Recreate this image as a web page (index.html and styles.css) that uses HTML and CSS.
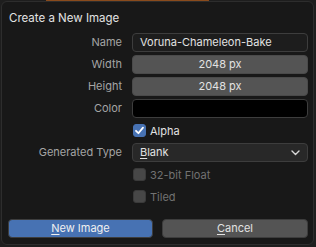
FILE: index.html
```html
<!DOCTYPE html>
<html>
<head>
<meta charset="utf-8">
<link rel="stylesheet" href="styles.css">
</head>
<body>
<div class="strip"></div>
<div class="dialog">
  <div class="title">Create a New Image</div>
  <div class="form">
    <div class="label">Name</div>
    <div class="field text">Voruna-Chameleon-Bake</div>
    <div class="label">Width</div>
    <div class="field num">2048 px</div>
    <div class="label">Height</div>
    <div class="field num">2048 px</div>
    <div class="label">Color</div>
    <div class="field color"></div>
    <div class="label"></div>
    <div class="check-row">
      <span class="box on"><svg width="13" height="13" viewBox="0 0 13 13"><polyline points="3,6.8 5.4,9.2 10,3.6" fill="none" stroke="#fff" stroke-width="1.8" stroke-linecap="round" stroke-linejoin="round"/></svg></span>
      <span class="ctext">Alpha</span>
    </div>
    <div class="label">Generated Type</div>
    <div class="field select"><span><u>B</u>lank</span><svg width="9" height="6" viewBox="0 0 9 6"><polyline points="1,1 4.5,4.5 8,1" fill="none" stroke="#d8d8d8" stroke-width="1.4" stroke-linecap="round" stroke-linejoin="round"/></svg></div>
    <div class="label"></div>
    <div class="check-row off">
      <span class="box"></span>
      <span class="ctext">32-bit Float</span>
    </div>
    <div class="label"></div>
    <div class="check-row off">
      <span class="box"></span>
      <span class="ctext">Tiled</span>
    </div>
  </div>
  <div class="buttons">
    <div class="btn primary"><u>N</u>ew Image</div>
    <div class="btn"><u>C</u>ancel</div>
  </div>
</div>
</body>
</html>
```
FILE: styles.css
```css
html, body {
  margin: 0;
  padding: 0;
  background: #1e1e1e;
  width: 316px;
  height: 247px;
  overflow: hidden;
  font-family: Inter, "Noto Sans", "DejaVu Sans", sans-serif;
  font-size: 11px;
}
.strip {
  height: 1px;
  width: 163px;
  margin-left: 46px;
  background: #8a4b1c;
}
.dialog {
  box-sizing: border-box;
  margin-left: 1px;
  width: 313px;
  height: 244px;
  background: #181818;
  border: 1px solid #2d2d2d;
  border-radius: 6px;
  padding: 6px 5px 6px 6px;
  display: flex;
  flex-direction: column;
}
.title {
  height: 20px;
  line-height: 20px;
  color: #e2e2e2;
  font-size: 11.5px;
  padding-left: 1px;
}
.form {
  margin-top: 5px;
  display: grid;
  grid-template-columns: 114px 176px;
  column-gap: 10px;
  row-gap: 3px;
  grid-auto-rows: 19px;
}
.label {
  text-align: right;
  color: #a5a5a5;
  line-height: 19px;
}
.field {
  box-sizing: border-box;
  border: 1px solid #3d3d3d;
  border-radius: 4px;
  color: #e2e2e2;
  line-height: 17px;
}
.text {
  background: #1d1d1d;
  padding-left: 7px;
}
.num {
  background: #545454;
  text-align: center;
  border-color: #4a4a4a;
}
.color {
  background: #000;
  border-color: #3d3d3d;
}
.select {
  background: #282828;
  padding: 0 7px 0 7px;
  display: flex;
  align-items: center;
  justify-content: space-between;
}
.select svg { margin-top: 1px; }
u {
  text-decoration: underline;
  text-underline-offset: 2px;
  text-decoration-thickness: 1px;
}
.check-row {
  display: flex;
  align-items: center;
  gap: 4px;
  color: #e2e2e2;
  padding-left: 1px;
}
.box {
  box-sizing: border-box;
  width: 13px;
  height: 13px;
  border-radius: 3px;
  background: #474747;
  border: 1px solid #3a3a3a;
  display: flex;
}
.box.on {
  background: #4772b3;
  border-color: #4772b3;
}
.box.on svg { margin: -1px; }
.off .ctext { color: #727272; }
.buttons {
  margin-top: 13px;
  display: grid;
  grid-template-columns: 145px 146px;
  column-gap: 9px;
}
.btn {
  box-sizing: border-box;
  height: 19px;
  line-height: 17px;
  text-align: center;
  border-radius: 4px;
  background: #545454;
  border: 1px solid #3d3d3d;
  color: #e2e2e2;
}
.btn.primary {
  background: #4772b3;
  border-color: #3d3d3d;
  color: #f0f0f0;
}
```
